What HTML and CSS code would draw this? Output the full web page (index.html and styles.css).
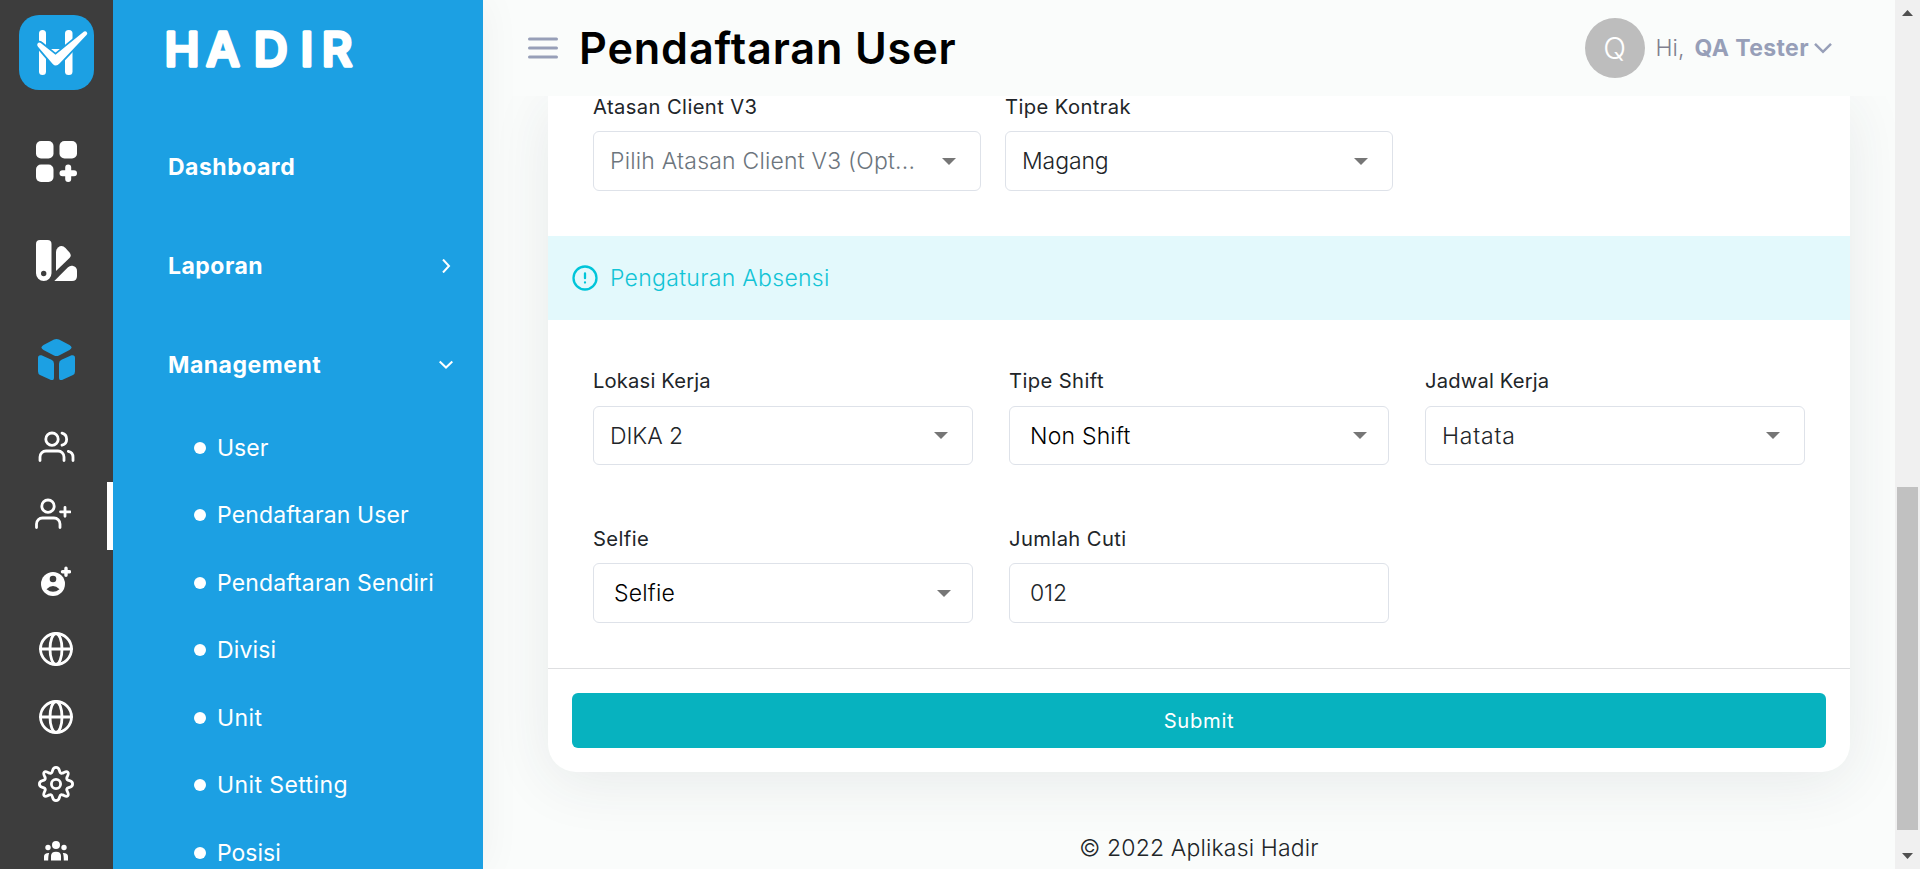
FILE: index.html
```html
<!DOCTYPE html>
<html lang="id">
<head>
<meta charset="utf-8">
<title>Pendaftaran User</title>
<link rel="stylesheet" href="styles.css">
</head>
<body>
<div class="app">
  <aside class="sidebar">
    <nav class="rail">
      <div class="rail-logo">
        <svg width="75" height="75" viewBox="0 0 75 75">
          <rect width="75" height="75" rx="20" fill="#1ca0e3"/>
          <g fill="#fff">
            <rect x="20" y="15" width="7" height="45" rx="3.5"/>
            <rect x="46" y="15" width="7.5" height="45" rx="3.5"/>
            <path d="M32 34h9v6h-9z"/>
          </g>
          <path d="M18.6 28.6Q20 26.5 22 28.200L36.500 39.800L65 16.500Q67.500 15.500 68.200 18Q68.500 19 67.500 20L40.500 48.500Q37 52.500 33.500 48.700L19 31.800Q17.500 30.200 18.600 28.600Z" fill="#fff" stroke="#1ca0e3" stroke-width="3.600" paint-order="stroke"/>
        </svg>
      </div>
      <div class="rail-main"><svg width="41" height="41" viewBox="0 0 41 41" fill="#fff"><rect width="17.500" height="17.500" rx="5"/><rect x="23.500" width="17.500" height="17.500" rx="5"/><rect y="23.500" width="17.500" height="17.500" rx="5"/><path d="M26.500 32.200h11.500M32.200 26.500v11.500" stroke="#fff" stroke-width="6" stroke-linecap="round"/></svg></div>
      <div class="rail-main"><svg width="41" height="41" viewBox="0 0 41 41" fill="#fff"><path fill-rule="evenodd" d="M4 0h7.500q4 0 4 4v29.200a7.750 7.750 0 0 1-15.500 0V4q0-4 4-4zM7.700 30.800a2.700 2.700 0 1 0 0 5.400a2.700 2.700 0 1 0 0-5.400z"/><path d="M20 12q0-3 2-4.500q4-3 7.500.5l4 4.500q2.500 3 0 5.500L20 31z"/><path d="M18.300 41L32 27.300q2-2 4.500-1.500q4.500 1 4.500 5.200v5q0 5-5 5z"/></svg></div>
      <div class="rail-main"><svg width="41" height="41" viewBox="0 0 41 41" fill="#1ca0e3"><path d="M18 .6q2.500-1 5 0l10.500 5.500q4 2.400 0 4.900L23 16.500q-2.500 1.200-5 0L7.500 11q-4-2.500 0-4.900z"/><path d="M2 19q0-3.500 3.500-2.700l10 4.500q2.500 1 2.500 4v14q0 3-3 2.200l-11-5q-2-1-2-3.500z"/><path d="M39 19q0-3.500-3.500-2.700l-10 4.500q-2.500 1-2.500 4v14q0 3 3 2.200l11-5q2-1 2-3.500z"/></svg></div>
      <div class="rail-sub"><svg width="37" height="32" viewBox="0 0 37 32" class="line"><circle cx="14" cy="8.200" r="6.200"/><path d="M2 29.500V26a6 6 0 0 1 6-6h12a6 6 0 0 1 6 6v3.500M24 2.200a6.200 6.200 0 0 1 0 12M30.300 20.300a6 6 0 0 1 4.700 6v3.200"/></svg></div>
      <div class="rail-sub active"><svg class="line user-add" width="37" height="32" viewBox="0 0 37 32"><circle cx="14" cy="8.200" r="6.200"/><path d="M2.500 29.500V26a6 6 0 0 1 6-6h11.500a6 6 0 0 1 6 6v3.500M31 9.300v9M26.500 13.800h9.500"/></svg></div>
      <div class="rail-sub"><svg class="account" width="30" height="32" viewBox="0 0 30 32"><circle cx="12" cy="19" r="12" fill="#fff"/><circle cx="12" cy="14" r="3.300" fill="#3d3d3d"/><path d="M5.500 24.200Q12 17.600 18.500 24.200Q12 29.500 5.500 24.200Z" fill="#3d3d3d"/><path d="M25 3.300v7M21.500 6.800h7" stroke="#fff" stroke-width="3.400" stroke-linecap="round"/></svg></div>
      <div class="rail-sub"><svg width="34" height="34" viewBox="0 0 34 34" class="line"><circle cx="17" cy="17" r="15.500"/><ellipse cx="17" cy="17" rx="6" ry="15.500"/><path d="M1.500 17h31"/></svg></div>
      <div class="rail-sub"><svg width="34" height="34" viewBox="0 0 34 34" class="line"><circle cx="17" cy="17" r="15.500"/><ellipse cx="17" cy="17" rx="6" ry="15.500"/><path d="M1.500 17h31"/></svg></div>
      <div class="rail-sub"><svg width="36" height="36" viewBox="0 0 36 36" class="line"><circle cx="18" cy="18" r="4.600"/><path d="M18.0 1.400C21.400 1.400 21.000 4.000 21.900 6.000C22.400 7.200 23.500 7.600 24.600 7.100C26.600 6.300 28.400 4.800 29.800 6.200C31.200 7.600 29.700 9.400 28.900 11.400C28.400 12.500 28.800 13.600 30.000 14.100C32.000 15.000 34.600 14.600 34.600 18.000C34.600 21.400 32.000 21.000 30.000 21.900C28.800 22.400 28.400 23.500 28.900 24.600C29.700 26.600 31.200 28.400 29.800 29.800C28.400 31.200 26.600 29.700 24.600 28.900C23.500 28.400 22.400 28.800 21.900 30.000C21.000 32.000 21.400 34.600 18.000 34.600C14.600 34.600 15.000 32.000 14.100 30.000C13.600 28.800 12.500 28.400 11.400 28.900C9.400 29.700 7.600 31.200 6.200 29.800C4.800 28.400 6.300 26.600 7.100 24.600C7.600 23.500 7.200 22.400 6.000 21.900C4.000 21.000 1.400 21.400 1.400 18.000C1.400 14.600 4.000 15.000 6.000 14.100C7.200 13.600 7.600 12.500 7.100 11.400C6.300 9.400 4.800 7.600 6.200 6.200C7.600 4.800 9.400 6.300 11.400 7.100C12.500 7.600 13.600 7.200 14.100 6.000C15.000 4.000 14.600 1.400 18.000 1.400Z"/></svg></div>
      <div class="rail-sub"><svg class="group" width="24" height="20" viewBox="0 0 24 20" fill="#fff"><circle cx="12" cy="4" r="4"/><circle cx="4" cy="6.500" r="2.700"/><circle cx="20" cy="6.500" r="2.700"/><path d="M7 19.500V15q0-4.300 5-4.300t5 4.300v4.500zM0 19.500V15.500q0-3.800 5.200-3.600Q4.200 14 4.200 19.500zM24 19.500V15.500q0-3.800-5.200-3.600q1 2.100 1 7.600z"/></svg></div>
    </nav>
    <nav class="menu">
      <div class="brand">
        <svg width="220" height="60" viewBox="0 0 220 60"><text class="brand-text" x="0.500 42.300 89.800 136.500 157.800" y="45.500">HADIR</text></svg>
      </div>
      <a class="item">Dashboard</a>
      <a class="item">Laporan<svg width="14" height="14" viewBox="0 0 14 14" class="chev"><path d="M4 .5l6 6.500-6 6.500"/></svg></a>
      <a class="item">Management<svg width="14" height="14" viewBox="0 0 14 14" class="chev"><path d="M.7 3.500l6.300 6 6.300-6"/></svg></a>
      <a class="sub tight">User</a>
      <a class="sub">Pendaftaran User</a>
      <a class="sub">Pendaftaran Sendiri</a>
      <a class="sub">Divisi</a>
      <a class="sub loose">Unit</a>
      <a class="sub loose">Unit Setting</a>
      <a class="sub tight">Posisi</a>
    </nav>
  </aside>

  <main class="main">
    <header class="topbar">
      <svg width="30" height="24" viewBox="0 0 30 24"><path d="M1.500 3h27M1.500 12h27M1.500 21h27" stroke="#979fb8" stroke-width="3" stroke-linecap="round"/></svg>
      <h1>Pendaftaran User</h1>
      <div class="avatar">Q</div>
      <span class="hi">Hi,</span>
      <span class="name">QA Tester</span>
      <svg width="18" height="12" viewBox="0 0 18 12" fill="none"><path d="M1 1.800l8 8 8-8" stroke="#979fb8" stroke-width="2.500"/></svg>
    </header>

    <section class="card">
      <div class="grid contract">
        <div class="field"><label>Atasan Client V3</label><div class="box muted"><span>Pilih Atasan Client V3 (Opt...</span><i class="caret"></i></div></div>
        <div class="field"><label>Tipe Kontrak</label><div class="box"><span class="snug">Magang</span><i class="caret"></i></div></div>
      </div>
      <div class="band">
        <svg width="26" height="26" viewBox="0 0 26 26" fill="none" stroke="#00c5d9" stroke-width="2.300" stroke-linecap="round"><circle cx="13" cy="13" r="11.500"/><path d="M13 8.500v4.700M13 17.500v.1"/></svg>
        <span>Pengaturan Absensi</span>
      </div>
      <div class="grid attendance">
        <div class="field"><label class="close">Lokasi Kerja</label><div class="box"><span class="snug">DIKA 2</span><i class="caret"></i></div></div>
        <div class="field"><label>Tipe Shift</label><div class="box native"><span>Non Shift</span><i class="caret"></i></div></div>
        <div class="field"><label class="close">Jadwal Kerja</label><div class="box"><span class="wide">Hatata</span><i class="caret"></i></div></div>
      </div>
      <div class="grid leave">
        <div class="field"><label>Selfie</label><div class="box native"><span>Selfie</span><i class="caret"></i></div></div>
        <div class="field"><label>Jumlah Cuti</label><div class="box number"><span class="snug">012</span></div></div>
      </div>
      <div class="actions"><button>Submit</button></div>
    </section>

    <footer>© 2022 Aplikasi Hadir</footer>
  </main>

  <div class="scroll">
    <svg width="11" height="6" viewBox="0 0 11 6"><path d="M0 6L5.500 0 11 6z" fill="#505050"/></svg>
    <div class="thumb"></div>
    <svg width="11" height="6" viewBox="0 0 11 6"><path d="M0 0L5.500 6 11 0z" fill="#505050"/></svg>
  </div>
</div>
</body>
</html>
```
FILE: styles.css
```css
* { box-sizing: border-box; }
body { margin: 0; font-family: Inter, "Liberation Sans", sans-serif; font-size: 23px; color: #212529; background: #fafcfb; }
svg { display: block; flex: none; }
.app { display: flex; width: 1920px; height: 869px; overflow: hidden; }

/* Sidebar */
.sidebar { display: flex; flex: none; position: relative; z-index: 3; box-shadow: 0 0 40px rgba(40, 40, 40, .05); }
.rail { width: 113px; background: #3d3d3d; display: flex; flex-direction: column; overflow: hidden; }
.rail-logo { height: 117.500px; padding: 15px 0 0 19px; flex: none; }
.rail-main { height: 99px; padding-bottom: 12px; flex: none; display: flex; align-items: center; justify-content: center; }
.rail-sub { height: 67.500px; padding: 0 1px 3px 0; flex: none; display: flex; align-items: center; justify-content: center; }
.rail-sub.active { border-right: 6px solid #fff; }
.line { fill: none; stroke: #fff; stroke-width: 2.800; stroke-linecap: round; stroke-linejoin: round; }
.user-add { margin-right: 1px; }
.account { margin-top: -1px; }
.group { margin-top: -2px; }
.menu { width: 370px; background: #1ca0e3; color: #fff; display: flex; flex-direction: column; overflow: hidden; }
.brand { height: 117.500px; padding: 20px 0 0 51px; flex: none; }
.brand-text { font: 500 47px Inter, sans-serif; fill: #fff; stroke: #fff; stroke-width: 3.600; stroke-linejoin: round; }
.item { height: 99px; flex: none; padding: 0 30px 0 55px; display: flex; align-items: center; justify-content: space-between; font-weight: 700; letter-spacing: .5px; }
.chev { fill: none; stroke: #fff; stroke-width: 2; }
.sub { height: 67.500px; flex: none; padding: 0 0 1px 81px; display: flex; align-items: center; gap: 11px; letter-spacing: .13px; }
.sub::before { content: ""; width: 12px; height: 12px; border-radius: 50%; background: #fff; }
.sub.tight { letter-spacing: 0; }
.sub.loose { letter-spacing: .4px; }

/* Header */
.main { width: 1412px; flex: none; display: flex; flex-direction: column; align-items: center; }
.topbar { width: 100%; height: 96px; flex: none; padding: 0 63px 0 45px; display: flex; align-items: center; background: #fafcfb; position: relative; z-index: 2; }
h1 { margin: 0 auto 0 21px; font-size: 43.200px; font-weight: 600; letter-spacing: .87px; color: #000; }
.avatar { width: 60px; height: 60px; border-radius: 50%; background: #bdbdbd; color: #fff; font-size: 30px; font-weight: 300; display: flex; align-items: center; justify-content: center; }
.hi { margin-left: 11px; font-weight: 300; color: #80808f; }
.name { margin: 0 5px 0 10px; font-weight: 700; letter-spacing: .4px; color: #979fb8; }

/* Card */
.card { width: 1302px; height: 676px; flex: none; margin-left: 20px; background: #fff; border-radius: 0 0 28px 28px; box-shadow: 0 10px 60px rgba(40, 55, 65, .09); }
.grid { display: grid; padding: 0 45px; }
.contract { grid-template-columns: 388px 388px; column-gap: 24px; height: 140px; }
.attendance, .leave { grid-template-columns: repeat(3, 380px); column-gap: 36px; }
.attendance { height: 208px; padding-top: 50px; }
.leave { height: 140px; }
.field { display: flex; flex-direction: column; gap: 14px; }
.attendance .field { gap: 15px; }
label { height: 21px; line-height: 21px; font-size: 20.200px; letter-spacing: .4px; white-space: nowrap; }
label.close { letter-spacing: .17px; }
.box { height: 60px; padding: 0 24px 0 16px; border: 1px solid #dee2e9; border-radius: 6px; display: flex; align-items: center; justify-content: space-between; font-weight: 300; letter-spacing: .2px; white-space: nowrap; }
.attendance .box { height: 59px; }
.muted { color: #6c757d; }
.native { padding: 0 21px 0 20px; color: #000; }
.number { padding-left: 20px; }
.snug { letter-spacing: -.1px; }
.wide { letter-spacing: .8px; }
.caret { border: 7px solid transparent; border-top-color: #767676; border-bottom: 0; }
.band { height: 84px; padding-left: 24px; display: flex; align-items: center; gap: 12px; background: #e3f9fc; color: #12c4d6; font-weight: 300; letter-spacing: .3px; }
.actions { border-top: 1px solid #dedfe1; padding: 24px; }
button { width: 100%; height: 55px; padding: 0 0 1px; border: 0; border-radius: 6px; background: #07b2bf; color: #fff; font: 400 20.200px Inter, sans-serif; letter-spacing: .7px; display: block; }
footer { margin: 62px 0 0 20px; font-weight: 300; letter-spacing: .16px; }

/* Scrollbar */
.scroll { width: 25px; flex: none; background: #f0f0f0; display: flex; flex-direction: column; align-items: center; padding: 10px 0; position: relative; z-index: 3; }
.thumb { width: 21px; height: 343px; margin: 471px 0 23px; background: #c1c1c1; }
```
